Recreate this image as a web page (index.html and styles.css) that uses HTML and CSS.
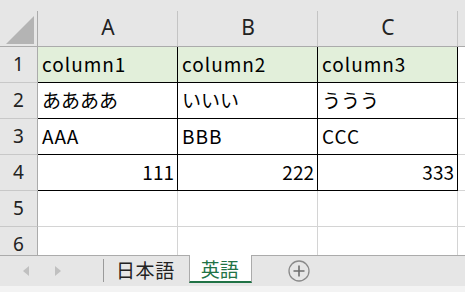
FILE: index.html
```html
<!DOCTYPE html>
<html lang="ja">
<head>
    <meta charset="UTF-8">
    <title>Book1 - Excel</title>
    <link rel="stylesheet" href="styles.css">
</head>
<body>
    <div class="sheet">
        <div class="grid">
            <!-- column headers -->
            <div class="corner"><span class="corner-mark"></span></div>
            <div class="col-head">A</div>
            <div class="col-head">B</div>
            <div class="col-head">C</div>
            <div class="col-head last"></div>

            <div class="row-head">1</div>
            <div class="cell tbl title latin">column1</div>
            <div class="cell tbl title latin">column2</div>
            <div class="cell tbl title latin">column3</div>
            <div class="cell"></div>

            <div class="row-head">2</div>
            <div class="cell tbl">ああああ</div>
            <div class="cell tbl">いいい</div>
            <div class="cell tbl">ううう</div>
            <div class="cell"></div>

            <div class="row-head">3</div>
            <div class="cell tbl latin">AAA</div>
            <div class="cell tbl latin">BBB</div>
            <div class="cell tbl latin">CCC</div>
            <div class="cell"></div>

            <div class="row-head">4</div>
            <div class="cell tbl num">111</div>
            <div class="cell tbl num">222</div>
            <div class="cell tbl num">333</div>
            <div class="cell"></div>

            <div class="row-head">5</div>
            <div class="cell"></div>
            <div class="cell"></div>
            <div class="cell"></div>
            <div class="cell"></div>

            <div class="row-head">6</div>
            <div class="cell"></div>
            <div class="cell"></div>
            <div class="cell"></div>
            <div class="cell"></div>
        </div>

        <div class="tabs">
            <div class="tab-nav">
                <span class="arrow left"></span>
                <span class="arrow right"></span>
            </div>
            <div class="tab">日本語</div>
            <div class="tab active">英語</div>
            <div class="add-sheet">
                <svg width="22" height="22" viewBox="0 0 22 22">
                    <circle cx="11" cy="11" r="10" fill="none" stroke="#8a8a8a" stroke-width="1.3"/>
                    <path d="M11 5.5v11M5.5 11h11" stroke="#6e6e6e" stroke-width="1.6"/>
                </svg>
            </div>
        </div>
        <div class="status"></div>
    </div>
</body>
</html>
```

FILE: styles.css
```css
body {
    margin: 0;
    padding: 0;
    background: #fff;
    font-family: "Noto Sans CJK JP", "Noto Sans", sans-serif;
}

.sheet {
    width: 465px;
    height: 292px;
    overflow: hidden;
    display: flex;
    flex-direction: column;
}

.grid {
    height: 255px;
    overflow: hidden;
    display: grid;
    grid-template-columns: 38px 140px 140px 140px 1fr;
    grid-template-rows: 47px;
    grid-auto-rows: 36px;
    flex-shrink: 0;
}

.corner,
.col-head {
    background: #e6e6e6;
    border-bottom: 1px solid #ababab;
    box-sizing: border-box;
}

.corner {
    display: flex;
    align-items: flex-end;
    padding: 0 0 2px 6px;
    background: #e6e6e6 linear-gradient(#ababab, #ababab) right 11px / 1px calc(100% - 11px) no-repeat;
}

.corner-mark {
    width: 28px;
    height: 28px;
    background: #b4b4b4;
    clip-path: polygon(100% 0, 100% 100%, 0 100%);
}

.col-head {
    background: #e6e6e6 linear-gradient(#c4c4c4, #c4c4c4) right 11px / 1px calc(100% - 11px) no-repeat;
    color: #222;
    font-size: 21px;
    text-align: center;
    line-height: 1;
    padding-top: 17px;
    font-family: "Noto Sans", sans-serif;
}

.col-head.last {
    background: #e6e6e6 linear-gradient(#217346, #217346) right bottom / 2px 2px no-repeat;
}

.row-head {
    background: #e6e6e6;
    border-right: 1px solid #ababab;
    border-bottom: 1px solid #c8c8c8;
    box-sizing: border-box;
    color: #222;
    font-family: "Noto Sans", sans-serif;
    font-size: 19px;
    text-align: center;
    line-height: 35px;
}

.cell {
    border-right: 1px solid #d4d4d4;
    border-bottom: 1px solid #d4d4d4;
    box-sizing: border-box;
    font-size: 19px;
    line-height: 34px;
    padding: 0 4px;
    color: #000;
    white-space: nowrap;
}

.cell.latin {
    letter-spacing: 1px;
}

.cell.tbl {
    border-right-color: #000;
    border-bottom-color: #000;
}

.cell.title {
    background: #e2efda;
}

.cell.num {
    text-align: right;
    padding-right: 3px;
}

.tabs {
    height: 31px;
    background: #e6e6e6;
    border-top: 1px solid #ababab;
    box-sizing: border-box;
    display: flex;
    align-items: stretch;
    flex-shrink: 0;
}

.tab-nav {
    width: 104px;
    border-right: 1px solid #9a9a9a;
    margin: 3px 0 4px;
    display: flex;
    align-items: center;
    gap: 26px;
    padding-left: 23px;
    box-sizing: border-box;
}

.arrow {
    width: 0;
    height: 0;
    border-top: 5px solid transparent;
    border-bottom: 5px solid transparent;
}

.arrow.left {
    border-right: 6px solid #c0c0c0;
}

.arrow.right {
    border-left: 6px solid #c0c0c0;
}

.tab {
    font-size: 19px;
    color: #222;
    padding: 0 14px 0 12px;
    line-height: 28px;
    white-space: nowrap;
    letter-spacing: 0.6px;
}

.tab.active {
    background: #fff;
    color: #217346;
    margin-top: -1px;
    border-left: 1px solid #ababab;
    border-right: 1px solid #ababab;
    border-bottom: 2px solid #217346;
    height: 28px;
    padding: 0 0 0 11px;
    width: 63px;
    box-sizing: border-box;
    line-height: 28px;
    letter-spacing: 0;
}

.add-sheet {
    display: flex;
    align-items: center;
    padding-left: 36px;
}

.add-sheet svg {
    display: block;
}

.status {
    flex: 1;
    background: #f3f3f3;
}
```
